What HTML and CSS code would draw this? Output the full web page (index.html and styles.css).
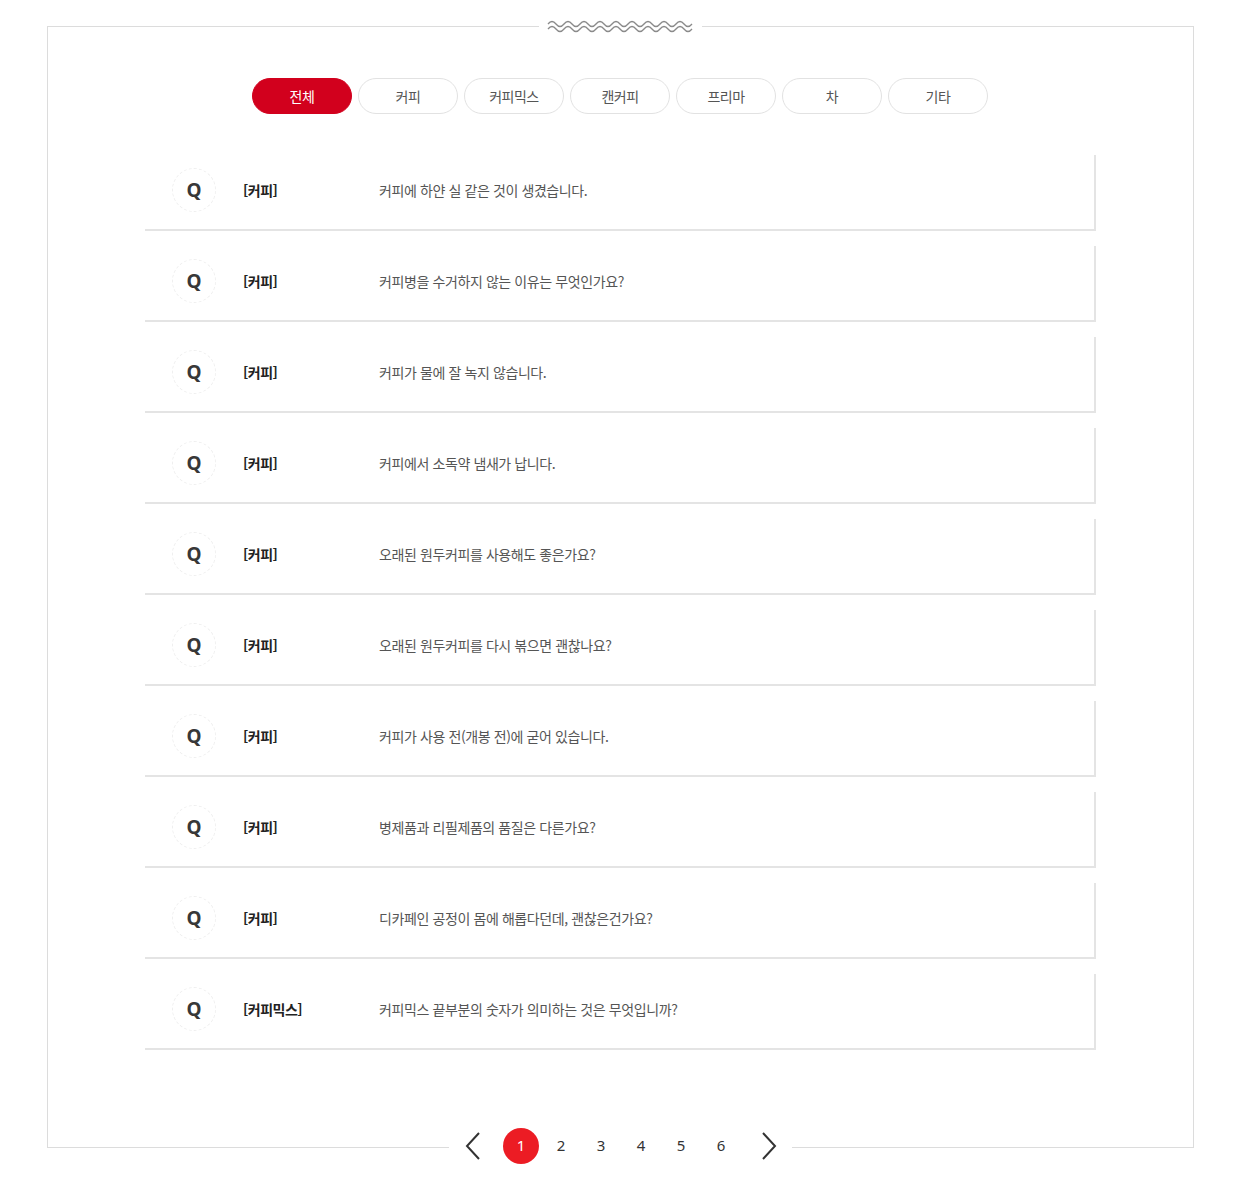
FILE: index.html
```html
<!DOCTYPE html>
<html lang="ko">
<head>
<meta charset="utf-8">
<title>FAQ</title>
<link rel="stylesheet" href="styles.css">
</head>
<body>
<div class="frame">
  <div class="edge">
    <span class="rule"></span>
    <span class="ornament">
      <svg width="146" height="14" viewBox="0 0 146 14">
        <path d="M1,4 q4,-5 8,0 t8,0 t8,0 t8,0 t8,0 t8,0 t8,0 t8,0 t8,0 t8,0 t8,0 t8,0 t8,0 t8,0 t8,0 t8,0 t8,0 t8,0" fill="none" stroke="#8a8a8a" stroke-width="1.3"/>
        <path d="M1,9 q4,-5 8,0 t8,0 t8,0 t8,0 t8,0 t8,0 t8,0 t8,0 t8,0 t8,0 t8,0 t8,0 t8,0 t8,0 t8,0 t8,0 t8,0 t8,0" fill="none" stroke="#8a8a8a" stroke-width="1.3"/>
      </svg>
    </span>
    <span class="rule"></span>
  </div>

  <ul class="tabs">
    <li class="tab active">전체</li>
    <li class="tab">커피</li>
    <li class="tab">커피믹스</li>
    <li class="tab">캔커피</li>
    <li class="tab">프리마</li>
    <li class="tab">차</li>
    <li class="tab">기타</li>
  </ul>

  <ul class="faq">
    <li class="card"><span class="q">Q</span><span class="cat">[커피]</span><span class="title">커피에 하얀 실 같은 것이 생겼습니다.</span></li>
    <li class="card"><span class="q">Q</span><span class="cat">[커피]</span><span class="title">커피병을 수거하지 않는 이유는 무엇인가요?</span></li>
    <li class="card"><span class="q">Q</span><span class="cat">[커피]</span><span class="title">커피가 물에 잘 녹지 않습니다.</span></li>
    <li class="card"><span class="q">Q</span><span class="cat">[커피]</span><span class="title">커피에서 소독약 냄새가 납니다.</span></li>
    <li class="card"><span class="q">Q</span><span class="cat">[커피]</span><span class="title">오래된 원두커피를 사용해도 좋은가요?</span></li>
    <li class="card"><span class="q">Q</span><span class="cat">[커피]</span><span class="title">오래된 원두커피를 다시 볶으면 괜찮나요?</span></li>
    <li class="card"><span class="q">Q</span><span class="cat">[커피]</span><span class="title">커피가 사용 전(개봉 전)에 굳어 있습니다.</span></li>
    <li class="card"><span class="q">Q</span><span class="cat">[커피]</span><span class="title">병제품과 리필제품의 품질은 다른가요?</span></li>
    <li class="card"><span class="q">Q</span><span class="cat">[커피]</span><span class="title">디카페인 공정이 몸에 해롭다던데, 괜찮은건가요?</span></li>
    <li class="card"><span class="q">Q</span><span class="cat">[커피믹스]</span><span class="title">커피믹스 끝부분의 숫자가 의미하는 것은 무엇입니까?</span></li>
  </ul>

  <div class="edge">
    <span class="rule"></span>
    <nav class="pager">
      <span class="arrow">
        <svg width="16" height="28" viewBox="0 0 16 28"><path d="M14,1 L2,14 L14,27" fill="none" stroke="#333" stroke-width="2"/></svg>
      </span>
      <span class="pages">
        <span class="page current">1</span>
        <span class="page">2</span>
        <span class="page">3</span>
        <span class="page">4</span>
        <span class="page">5</span>
        <span class="page">6</span>
      </span>
      <span class="arrow">
        <svg width="16" height="28" viewBox="0 0 16 28"><path d="M2,1 L14,14 L2,27" fill="none" stroke="#333" stroke-width="2"/></svg>
      </span>
    </nav>
    <span class="rule"></span>
  </div>
</div>
</body>
</html>
```

FILE: styles.css
```css
* { box-sizing: border-box; }
html, body { margin: 0; padding: 0; background: #fff; }
body {
  font-family: "Noto Sans CJK KR", "Noto Sans", sans-serif;
  color: #333;
  padding: 26px 0 44px;
}
ul { list-style: none; margin: 0; padding: 0; }

.frame {
  width: 1147px;
  margin: 0 0 0 47px;
  border-left: 1px solid #dcdcdc;
  border-right: 1px solid #dcdcdc;
}

.edge {
  display: flex;
  align-items: center;
  height: 1px;
}
.rule {
  flex: 1;
  height: 1px;
  background: #dcdcdc;
}
.ornament {
  display: flex;
  padding: 0 9px 0 8px;
  background: #fff;
}
.ornament svg { display: block; }

.tabs {
  display: flex;
  justify-content: center;
  gap: 6px;
  margin-top: 51px;
  padding-right: 1px;
}
.tab {
  width: 100px;
  height: 36px;
  border: 1px solid #e2e2e2;
  border-radius: 18px;
  display: flex;
  align-items: center;
  justify-content: center;
  padding-bottom: 1px;
  font-size: 14px;
  color: #555;
  letter-spacing: -0.5px;
}
.tab.active {
  background: #d2001d;
  border-color: #d2001d;
  color: #fff;
}

.faq {
  display: flex;
  flex-direction: column;
  gap: 15px;
  margin: 41px 0 97px;
  padding-left: 97px;
}
.card {
  width: 951px;
  height: 76px;
  border-right: 2px solid #e4e4e4;
  border-bottom: 2px solid #e4e4e4;
  display: flex;
  align-items: center;
  padding: 0 0 4px 27px;
}
.q {
  width: 44px;
  height: 44px;
  border-radius: 50%;
  border: 1px dashed #efefef;
  display: flex;
  align-items: center;
  justify-content: center;
  font-family: "Noto Sans", sans-serif;
  font-weight: 700;
  font-size: 19px;
  color: #383838;
  margin-right: 27px;
}
.cat {
  width: 136px;
  font-size: 14px;
  font-weight: 700;
  color: #222;
  letter-spacing: -0.5px;
}
.title {
  font-size: 14px;
  color: #555;
  letter-spacing: -0.4px;
}

.pager {
  display: flex;
  align-items: center;
  flex: none;
  height: 36px;
  margin-bottom: 4px;
  padding: 0 3px 0 4px;
  background: #fff;
}
.arrow {
  width: 40px;
  display: flex;
  justify-content: center;
}
.arrow svg { display: block; }
.pages {
  display: flex;
  margin: 0 8px;
}
.page {
  width: 40px;
  height: 36px;
  display: flex;
  align-items: center;
  justify-content: center;
  padding-bottom: 1px;
  font-family: "Noto Sans", sans-serif;
  font-size: 15px;
  color: #333;
}
.page.current {
  width: 36px;
  margin: 0 2px;
  border-radius: 50%;
  background: #ec1c24;
  color: #fff;
}
```
